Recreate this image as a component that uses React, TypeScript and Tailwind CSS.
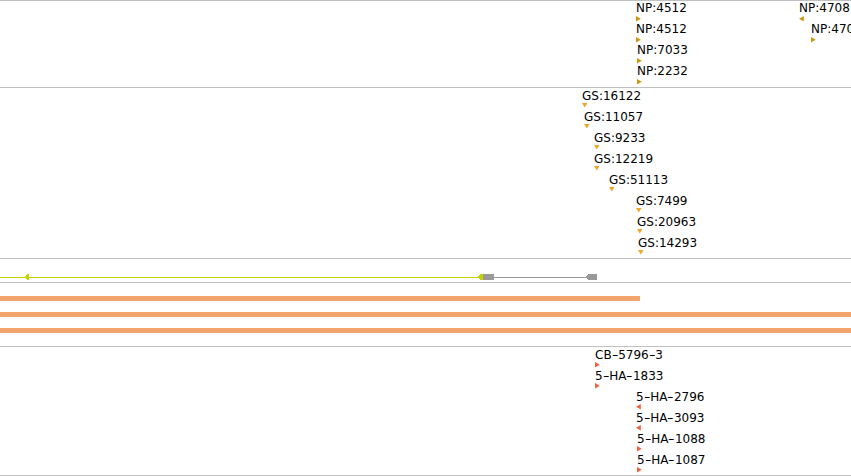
import React from "react";

type Dir = "right" | "left" | "down";
type Feat = { left: string; label: string; dir: Dir; color: string };

function Tri({ dir, color }: { dir: Dir; color: string }) {
  if (dir === "down")
    return (
      <svg width="6" height="5" className="block">
        <polygon points="0,0 5.5,0 2.75,4.5" fill={color} />
      </svg>
    );
  if (dir === "left")
    return (
      <svg width="5" height="6" className="block">
        <polygon points="4.8,0 0,2.75 4.8,5.5" fill={color} />
      </svg>
    );
  return (
    <svg width="5" height="6" className="block">
      <polygon points="0,0 4.8,2.75 0,5.5" fill={color} />
    </svg>
  );
}

function Label({ text }: { text: string }) {
  const parts = text.split("-");
  return (
    <>
      {parts.map((p, i) => (
        <React.Fragment key={i}>
          {i > 0 && (
            <span className="inline-block w-[6.5px] text-center scale-x-150">-</span>
          )}
          {p}
        </React.Fragment>
      ))}
    </>
  );
}

function Feature({ f, triGap }: { f: Feat; triGap: string }) {
  return (
    <div className={`absolute top-0 ${f.left}`}>
      <div className="whitespace-nowrap text-[12px] leading-[14px] text-black">
        <Label text={f.label} />
      </div>
      <div className={triGap}>
        <Tri dir={f.dir} color={f.color} />
      </div>
    </div>
  );
}

const NP = "#d1960f";
const GS = "#f2a526";
const HA = "#f2603d";

const track1: Feat[][] = [
  [
    { left: "left-[636px]", label: "NP:4512", dir: "right", color: NP },
    { left: "left-[799px]", label: "NP:4708", dir: "left", color: NP },
  ],
  [
    { left: "left-[636px]", label: "NP:4512", dir: "right", color: NP },
    { left: "left-[811px]", label: "NP:4708", dir: "right", color: NP },
  ],
  [{ left: "left-[637px]", label: "NP:7033", dir: "right", color: NP }],
  [{ left: "left-[637px]", label: "NP:2232", dir: "right", color: NP }],
];

const track2: Feat[][] = [
  [{ left: "left-[582px]", label: "GS:16122", dir: "down", color: GS }],
  [{ left: "left-[584px]", label: "GS:11057", dir: "down", color: GS }],
  [{ left: "left-[594px]", label: "GS:9233", dir: "down", color: GS }],
  [{ left: "left-[594px]", label: "GS:12219", dir: "down", color: GS }],
  [{ left: "left-[609px]", label: "GS:51113", dir: "down", color: GS }],
  [{ left: "left-[636px]", label: "GS:7499", dir: "down", color: GS }],
  [{ left: "left-[637px]", label: "GS:20963", dir: "down", color: GS }],
  [{ left: "left-[638px]", label: "GS:14293", dir: "down", color: GS }],
];

const track5: Feat[][] = [
  [{ left: "left-[595px]", label: "CB-5796-3", dir: "right", color: HA }],
  [{ left: "left-[595px]", label: "5-HA-1833", dir: "right", color: HA }],
  [{ left: "left-[636px]", label: "5-HA-2796", dir: "left", color: HA }],
  [{ left: "left-[636px]", label: "5-HA-3093", dir: "left", color: HA }],
  [{ left: "left-[637px]", label: "5-HA-1088", dir: "right", color: HA }],
  [{ left: "left-[637px]", label: "5-HA-1087", dir: "right", color: HA }],
];

function Rows({ rows, triGap }: { rows: Feat[][]; triGap: string }) {
  return (
    <>
      {rows.map((r, i) => (
        <div key={i} className="relative h-[21px]">
          {r.map((f, j) => (
            <Feature key={j} f={f} triGap={triGap} />
          ))}
        </div>
      ))}
    </>
  );
}

export default function App() {
  return (
    <div
      className="w-[851px] h-[476px] overflow-hidden bg-white"
      style={{ fontFamily: '"DejaVu Sans", Verdana, sans-serif' }}
    >
      <div className="h-px bg-[#c0c0c0]" />
      {/* Track 1 */}
      <div className="h-[87px] border-b border-[#c0c0c0] overflow-hidden">
        <Rows rows={track1} triGap="mt-px" />
      </div>
      {/* Track 2 */}
      <div className="h-[171px] border-b border-[#c0c0c0] pt-px overflow-hidden">
        <Rows rows={track2} triGap="mt-0" />
      </div>
      {/* Track 3 - gene model */}
      <div className="h-[24px] border-b border-[#c0c0c0]">
        <svg width="851" height="23" className="block" shapeRendering="crispEdges">
          <rect x="0" y="18" width="478" height="1" fill="#c4d400" />
          <polygon points="24,18 28,15 29,15 29,21 28,21" fill="#c4d400" />
          <polygon points="477,18 481,15 483,15 483,21 481,21" fill="#c4d400" />
          <rect x="483" y="15" width="11" height="6" fill="#999999" />
          <rect x="494" y="18" width="92" height="1" fill="#999999" />
          <polygon points="585,18 588,15 597,15 597,21 588,21" fill="#999999" />
        </svg>
      </div>
      {/* Track 4 - bars */}
      <div className="h-[64px] border-b border-[#c0c0c0] pt-[13px] flex flex-col gap-[11px]">
        <div className="h-[5px] w-[640px] bg-[#f4a46f]" />
        <div className="h-[5px] w-full bg-[#f4a46f]" />
        <div className="h-[5px] w-full bg-[#f4a46f]" />
      </div>
      {/* Track 5 */}
      <div className="h-[129px] border-b border-[#c0c0c0] pt-px overflow-hidden">
        <Rows rows={track5} triGap="mt-0" />
      </div>
    </div>
  );
}
